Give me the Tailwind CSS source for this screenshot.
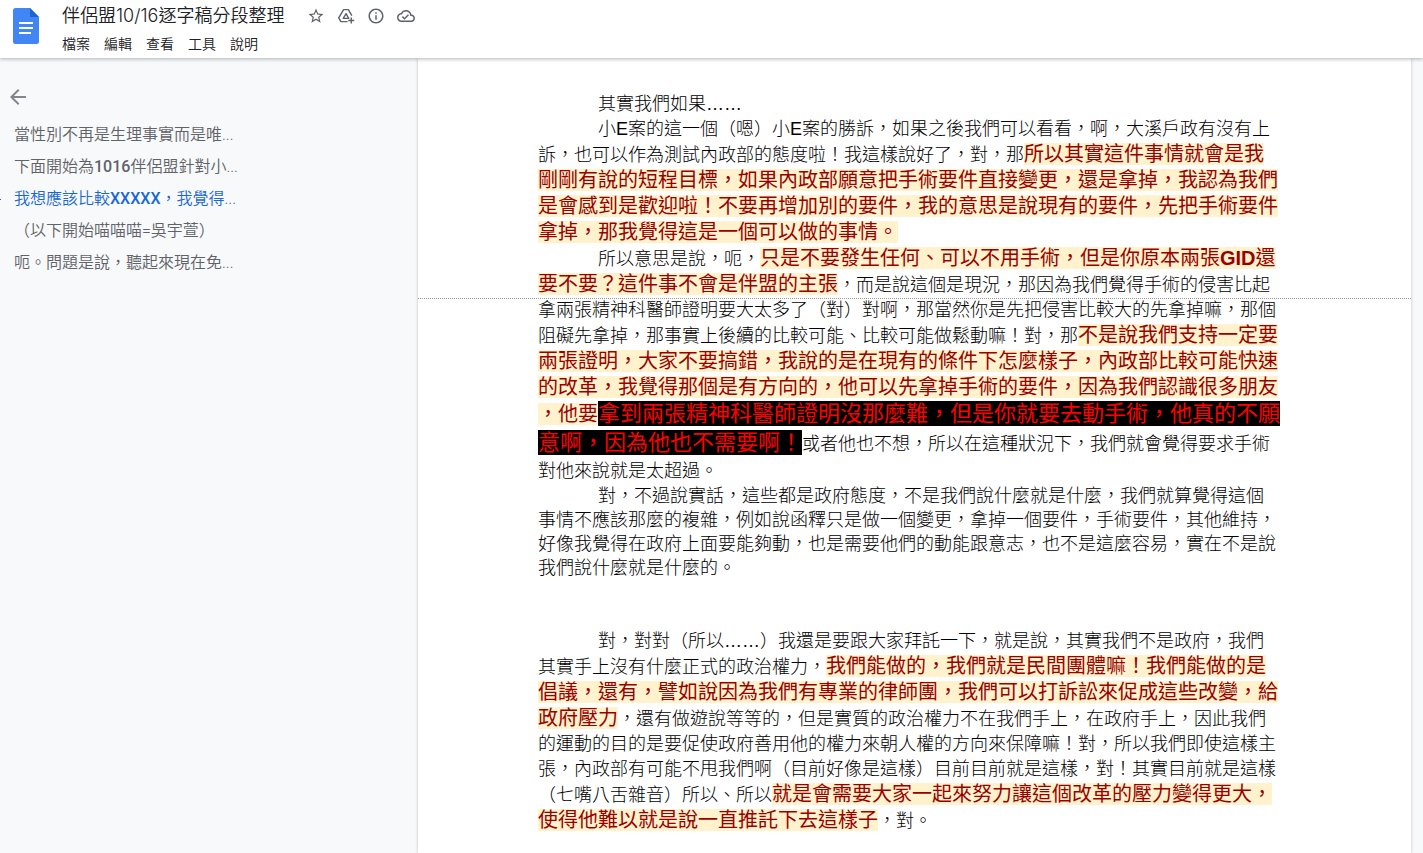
<!DOCTYPE html>
<html lang="zh-Hant-TW">
<head>
<meta charset="utf-8">
<meta name="viewport" content="width=device-width, initial-scale=1">
<title>伴侶盟10/16逐字稿分段整理</title>
<script src="https://cdn.jsdelivr.net/npm/@tailwindcss/browser@4"></script>
</head>
<body class="h-screen flex flex-col overflow-hidden bg-[#f8f9fb] font-['Liberation_Sans','Noto_Sans_CJK_TC',sans-serif] text-black">
<header class="relative z-10 flex h-[58px] shrink-0 gap-[23px] bg-white pl-[13px] shadow-[0_1px_4px_rgba(60,64,67,0.4)]">
  <a href="#" aria-label="文件首頁" class="mt-2 block h-9">
    <svg class="h-9 w-[26px]" viewBox="0 0 26 36"><path fill="#4285f4" d="M2.500 0H17l9 9v24.500a2.500 2.500 0 0 1-2.500 2.500h-21A2.500 2.500 0 0 1 0 33.500v-31A2.500 2.500 0 0 1 2.500 0z"/><path fill="#1967d2" d="M17 0l9 9h-9z"/><path fill="#fff" d="M6 14h14v2H6zM6 19h14v2H6zM6 24h12v2H6z"/></svg>
  </a>
  <div class="flex flex-col gap-[5px] pt-1">
    <div class="flex items-center gap-[23px]">
      <h1 class="font-['Inter','Noto_Sans_CJK_TC',sans-serif] text-[18px] leading-6 font-[350] text-[#202124]">伴侶盟10/16逐字稿分段整理</h1>
      <div class="flex gap-3 text-[#5f6368]">
        <button type="button" aria-label="加上星號"><svg class="size-[18px]" viewBox="0 0 24 24" fill="currentColor"><path d="M22 9.240l-7.190-.62L12 2 9.190 8.630 2 9.240l5.460 4.730L5.820 21 12 17.270 18.180 21l-1.630-7.030L22 9.240zM12 15.400l-3.760 2.270 1-4.280-3.320-2.880 4.380-.38L12 6.100l1.710 4.040 4.380.38-3.320 2.880 1 4.280L12 15.400z"/></svg></button>
        <button type="button" aria-label="新增至雲端硬碟"><svg class="size-[18px]" viewBox="0 0 24 24" fill="none" stroke="currentColor" stroke-width="1.900" stroke-linejoin="round"><path d="M14 19.500H5.200L2.300 14.600 8.800 3.500h6.400l4.600 7.900M12.100 8.900l-3.800 6.300h7.300zM14 19.500"/><path d="M19 14v8M15 18h8"/></svg></button>
        <button type="button" aria-label="文件資訊"><svg class="size-[18px]" viewBox="0 0 24 24" fill="currentColor"><path d="M11 7h2v2h-2zm0 4h2v6h-2zm1-9C6.480 2 2 6.480 2 12s4.480 10 10 10 10-4.480 10-10S17.520 2 12 2zm0 18c-4.410 0-8-3.590-8-8s3.590-8 8-8 8 3.590 8 8-3.590 8-8 8z"/></svg></button>
        <button type="button" aria-label="查看文件狀態"><svg class="size-[18px]" viewBox="0 0 24 24" fill="currentColor"><path d="M19.350 10.040C18.670 6.590 15.640 4 12 4 9.110 4 6.600 5.640 5.350 8.040 2.340 8.360 0 10.910 0 14c0 3.310 2.690 6 6 6h13c2.760 0 5-2.240 5-5 0-2.640-2.050-4.780-4.650-4.960zM19 18H6c-2.210 0-4-1.790-4-4 0-2.050 1.530-3.760 3.560-3.970l1.070-.11.500-.95C8.080 7.140 9.940 6 12 6c2.620 0 4.880 1.860 5.390 4.430l.3 1.500 1.530.11c1.560.1 2.780 1.410 2.780 2.960 0 1.650-1.350 3-3 3zm-9-3.820l-2.090-2.090L6.500 13.500 10 17l6.010-6.010-1.410-1.410z"/></svg></button>
      </div>
    </div>
    <nav class="flex gap-[14px] text-[14px] leading-[22px] font-[350] text-[#202124]">
      <button type="button">檔案</button><button type="button">編輯</button><button type="button">查看</button><button type="button">工具</button><button type="button">說明</button>
    </nav>
  </div>
</header>
<div class="flex min-h-0 flex-1">
  <aside class="w-[418px] shrink-0 pt-[27px]">
    <button type="button" aria-label="關閉文件大綱" class="ml-[6px] block text-[#80868b]"><svg class="size-6" viewBox="0 0 24 24" fill="currentColor"><path d="M20 11H7.830l5.590-5.590L12 4l-8 8 8 8 1.410-1.410L7.830 13H20v-2z"/></svg></button>
    <nav class="mt-[10px] flex flex-col font-['Roboto','Noto_Sans_CJK_TC',sans-serif] text-[16px] leading-8 font-[350] text-[#5f6368]">
      <a href="#" class="pl-[14px]">當性別不再是生理事實而是唯...</a>
      <a href="#" class="pl-[14px]">下面開始為<span class="font-medium">1016</span>伴侶盟針對小...</a>
      <a href="#" aria-current="true" class="flex items-center gap-[13px] text-[#1967d2]"><span class="h-px w-px bg-[#1967d2]"></span><span>我想應該比較<span class="font-medium">XXXXX</span>，我覺得...</span></a>
      <a href="#" class="pl-[14px]">（以下開始喵喵喵=吳宇萱）</a>
      <a href="#" class="pl-[14px]">呃。問題是說，聽起來現在免...</a>
    </nav>
  </aside>
  <main class="relative mr-3 flex-1 bg-white pt-[34px] pl-[120px] text-[18px] leading-[25px] font-light whitespace-nowrap shadow-[0_0_3px_rgba(60,64,67,0.3)]">
    <p>
      <span class="block pl-[60px]">其實我們如果……</span>
    </p>
    <p>
      <span class="block pl-[60px]">小E案的這一個（嗯）小E案的勝訴，如果之後我們可以看看，啊，大溪戶政有沒有上</span>
      <span class="block leading-[26px]">訴，也可以作為測試內政部的態度啦！我這樣說好了，對，那<b class="bg-[#fff2cc] text-[20px] leading-none font-normal text-[#990000]">所以其實這件事情就會是我</b></span>
      <span class="block leading-[26px]"><b class="bg-[#fff2cc] text-[20px] leading-none font-normal text-[#990000]">剛剛有說的短程目標，如果內政部願意把手術要件直接變更，還是拿掉，我認為我們</b></span>
      <span class="block leading-[26px]"><b class="bg-[#fff2cc] text-[20px] leading-none font-normal text-[#990000]">是會感到是歡迎啦！不要再增加別的要件，我的意思是說現有的要件，先把手術要件</b></span>
      <span class="block leading-[26px]"><b class="bg-[#fff2cc] text-[20px] leading-none font-normal text-[#990000]">拿掉，那我覺得這是一個可以做的事情。</b></span>
    </p>
    <p>
      <span class="block pl-[60px] leading-[26px]">所以意思是說，呃，<b class="bg-[#fff2cc] text-[20px] leading-none font-normal text-[#990000]">只是不要發生任何、可以不用手術，但是你原本兩張<span class="font-bold">GID</span>還</b></span>
      <span class="block leading-[26px]"><b class="bg-[#fff2cc] text-[20px] leading-none font-normal text-[#990000]">要不要？這件事不會是伴盟的主張</b>，而是說這個是現況，那因為我們覺得手術的侵害比起</span>
      <span class="block"><span class="absolute inset-x-0 border-t border-dotted border-[#999999]"></span>拿兩張精神科醫師證明要大太多了（對）對啊，那當然你是先把侵害比較大的先拿掉嘛，那個</span>
      <span class="block leading-[26px]">阻礙先拿掉，那事實上後續的比較可能、比較可能做鬆動嘛！對，那<b class="bg-[#fff2cc] text-[20px] leading-none font-normal text-[#990000]">不是說我們支持一定要</b></span>
      <span class="block leading-[26px]"><b class="bg-[#fff2cc] text-[20px] leading-none font-normal text-[#990000]">兩張證明，大家不要搞錯，我說的是在現有的條件下怎麼樣子，內政部比較可能快速</b></span>
      <span class="block leading-[26px]"><b class="bg-[#fff2cc] text-[20px] leading-none font-normal text-[#990000]">的改革，我覺得那個是有方向的，他可以先拿掉手術的要件，因為我們認識很多朋友</b></span>
      <span class="block leading-[29px]"><b class="bg-[#fff2cc] text-[20px] leading-none font-normal text-[#990000]">，他要</b><b class="bg-black text-[22px] leading-none font-normal text-[#ff0000]">拿到兩張精神科醫師證明沒那麼難，但是你就要去動手術，他真的不願</b></span>
      <span class="block leading-[29px]"><b class="bg-black text-[22px] leading-none font-normal text-[#ff0000]">意啊，因為他也不需要啊！</b>或者他也不想，所以在這種狀況下，我們就會覺得要求手術</span>
      <span class="block">對他來說就是太超過。</span>
    </p>
    <p class="leading-6">
      <span class="block pl-[60px]">對，不過說實話，這些都是政府態度，不是我們說什麼就是什麼，我們就算覺得這個</span>
      <span class="block">事情不應該那麼的複雜，例如說函釋只是做一個變更，拿掉一個要件，手術要件，其他維持，</span>
      <span class="block">好像我覺得在政府上面要能夠動，也是需要他們的動能跟意志，也不是這麼容易，實在不是說</span>
      <span class="block">我們說什麼就是什麼的。</span>
    </p>
    <p class="mt-[49px]">
      <span class="block pl-[60px]">對，對對（所以……）我還是要跟大家拜託一下，就是說，其實我們不是政府，我們</span>
      <span class="block leading-[26px]">其實手上沒有什麼正式的政治權力，<b class="bg-[#fff2cc] text-[20px] leading-none font-normal text-[#990000]">我們能做的，我們就是民間團體嘛！我們能做的是</b></span>
      <span class="block leading-[26px]"><b class="bg-[#fff2cc] text-[20px] leading-none font-normal text-[#990000]">倡議，還有，譬如說因為我們有專業的律師團，我們可以打訴訟來促成這些改變，給</b></span>
      <span class="block leading-[26px]"><b class="bg-[#fff2cc] text-[20px] leading-none font-normal text-[#990000]">政府壓力</b>，還有做遊說等等的，但是實質的政治權力不在我們手上，在政府手上，因此我們</span>
      <span class="block">的運動的目的是要促使政府善用他的權力來朝人權的方向來保障嘛！對，所以我們即使這樣主</span>
      <span class="block">張，內政部有可能不甩我們啊（目前好像是這樣）目前目前就是這樣，對！其實目前就是這樣</span>
      <span class="block leading-[26px]">（七嘴八舌雜音）所以、所以<b class="bg-[#fff2cc] text-[20px] leading-none font-normal text-[#990000]">就是會需要大家一起來努力讓這個改革的壓力變得更大，</b></span>
      <span class="block leading-[26px]"><b class="bg-[#fff2cc] text-[20px] leading-none font-normal text-[#990000]">使得他難以就是說一直推託下去這樣子</b>，對。</span>
    </p>
  </main>
</div>
</body>
</html>
